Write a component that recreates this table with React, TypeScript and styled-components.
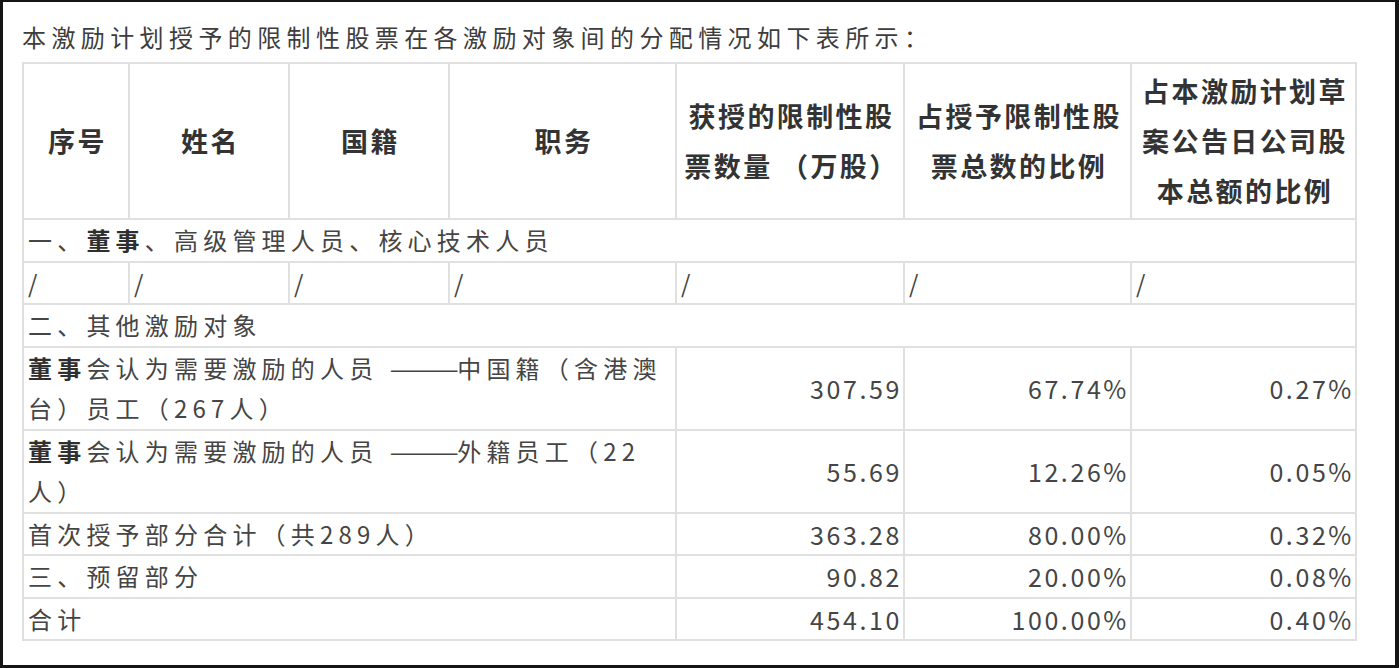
import React from 'react';
import styled, { createGlobalStyle } from 'styled-components';

const GlobalStyle = createGlobalStyle`
  html, body {
    margin: 0;
    padding: 0;
    background: #ffffff;
  }
  body {
    font-family: "Noto Sans CJK SC", "Noto Sans", sans-serif;
  }
`;

const Frame = styled.div`
  width: 1399px;
  height: 668px;
  box-sizing: border-box;
  border-style: solid;
  border-color: #151515;
  border-width: 2px 4px 3px 3px;
  background: #ffffff;
  padding: 15px 0 0 19px;
  display: flex;
  flex-direction: column;
  gap: 5px;
`;

const Intro = styled.p`
  margin: 0;
  font-size: 24px;
  line-height: 40px;
  letter-spacing: 5.4px;
  color: #3d3d3d;
  white-space: nowrap;
`;

const Table = styled.table`
  width: 1333px;
  table-layout: fixed;
  border-collapse: collapse;
  color: #454545;
`;

const HeadCell = styled.th`
  border: 2px solid #e0e0e0;
  padding: 2px 0 2px 3px;
  font-size: 27px;
  line-height: 50px;
  letter-spacing: 2.4px;
  font-weight: 700;
  color: #333333;
  text-align: center;
  vertical-align: middle;
  height: 150px;
`;

const Cell = styled.td<{ $align?: 'left' | 'right' }>`
  border: 2px solid #e0e0e0;
  padding: 0 ${(p) => (p.$align === 'right' ? '1px' : '4px')} 0 4px;
  font-size: ${(p) => (p.$align === 'right' ? '25px' : '24px')};
  line-height: 40.5px;
  letter-spacing: ${(p) => (p.$align === 'right' ? '2.6px' : '5.2px')};
  text-align: ${(p) => p.$align ?? 'left'};
  vertical-align: middle;
  white-space: nowrap;
  overflow: hidden;
`;

const Marked = styled.span`
  font-weight: 700;
  color: #2f2f2f;
`;

const Dash = styled.span`
  display: inline-block;
  letter-spacing: 0;
  transform: scaleX(1.75);
  transform-origin: left center;
  margin-right: 28px;
`;

const widths = [106, 160, 160, 227, 228, 227, 225];

interface DataRow {
  label: React.ReactNode;
  shares: string;
  ofGrant: string;
  ofCapital: string;
}

const rows: DataRow[] = [
  {
    label: (
      <>
        <Marked>董事</Marked>会认为需要激励的人员 <Dash>——</Dash>中国籍（含港澳
        <br />
        台）员工（267人）
      </>
    ),
    shares: '307.59',
    ofGrant: '67.74%',
    ofCapital: '0.27%',
  },
  {
    label: (
      <>
        <Marked>董事</Marked>会认为需要激励的人员 <Dash>——</Dash>外籍员工（22
        <br />
        人）
      </>
    ),
    shares: '55.69',
    ofGrant: '12.26%',
    ofCapital: '0.05%',
  },
  { label: '首次授予部分合计（共289人）', shares: '363.28', ofGrant: '80.00%', ofCapital: '0.32%' },
  { label: '三、预留部分', shares: '90.82', ofGrant: '20.00%', ofCapital: '0.08%' },
  { label: '合计', shares: '454.10', ofGrant: '100.00%', ofCapital: '0.40%' },
];

const App: React.FC = () => {
  return (
    <>
      <GlobalStyle />
      <Frame>
        <Intro>本激励计划授予的限制性股票在各激励对象间的分配情况如下表所示：</Intro>
        <Table>
          <colgroup>
            {widths.map((w, i) => (
              <col key={i} style={{ width: w }} />
            ))}
          </colgroup>
          <thead>
            <tr>
              <HeadCell>序号</HeadCell>
              <HeadCell>姓名</HeadCell>
              <HeadCell>国籍</HeadCell>
              <HeadCell>职务</HeadCell>
              <HeadCell>
                获授的限制性股
                <br />
                票数量 （万股）
              </HeadCell>
              <HeadCell>
                占授予限制性股
                <br />
                票总数的比例
              </HeadCell>
              <HeadCell>
                占本激励计划草
                <br />
                案公告日公司股
                <br />
                本总额的比例
              </HeadCell>
            </tr>
          </thead>
          <tbody>
            <tr>
              <Cell colSpan={7}>
                一、<Marked>董事</Marked>、高级管理人员、核心技术人员
              </Cell>
            </tr>
            <tr>
              {widths.map((_, i) => (
                <Cell key={i}>/</Cell>
              ))}
            </tr>
            <tr>
              <Cell colSpan={7}>二、其他激励对象</Cell>
            </tr>
            {rows.map((r, i) => (
              <tr key={i}>
                <Cell colSpan={4}>{r.label}</Cell>
                <Cell $align="right">{r.shares}</Cell>
                <Cell $align="right">{r.ofGrant}</Cell>
                <Cell $align="right">{r.ofCapital}</Cell>
              </tr>
            ))}
          </tbody>
        </Table>
      </Frame>
    </>
  );
};

export default App;
